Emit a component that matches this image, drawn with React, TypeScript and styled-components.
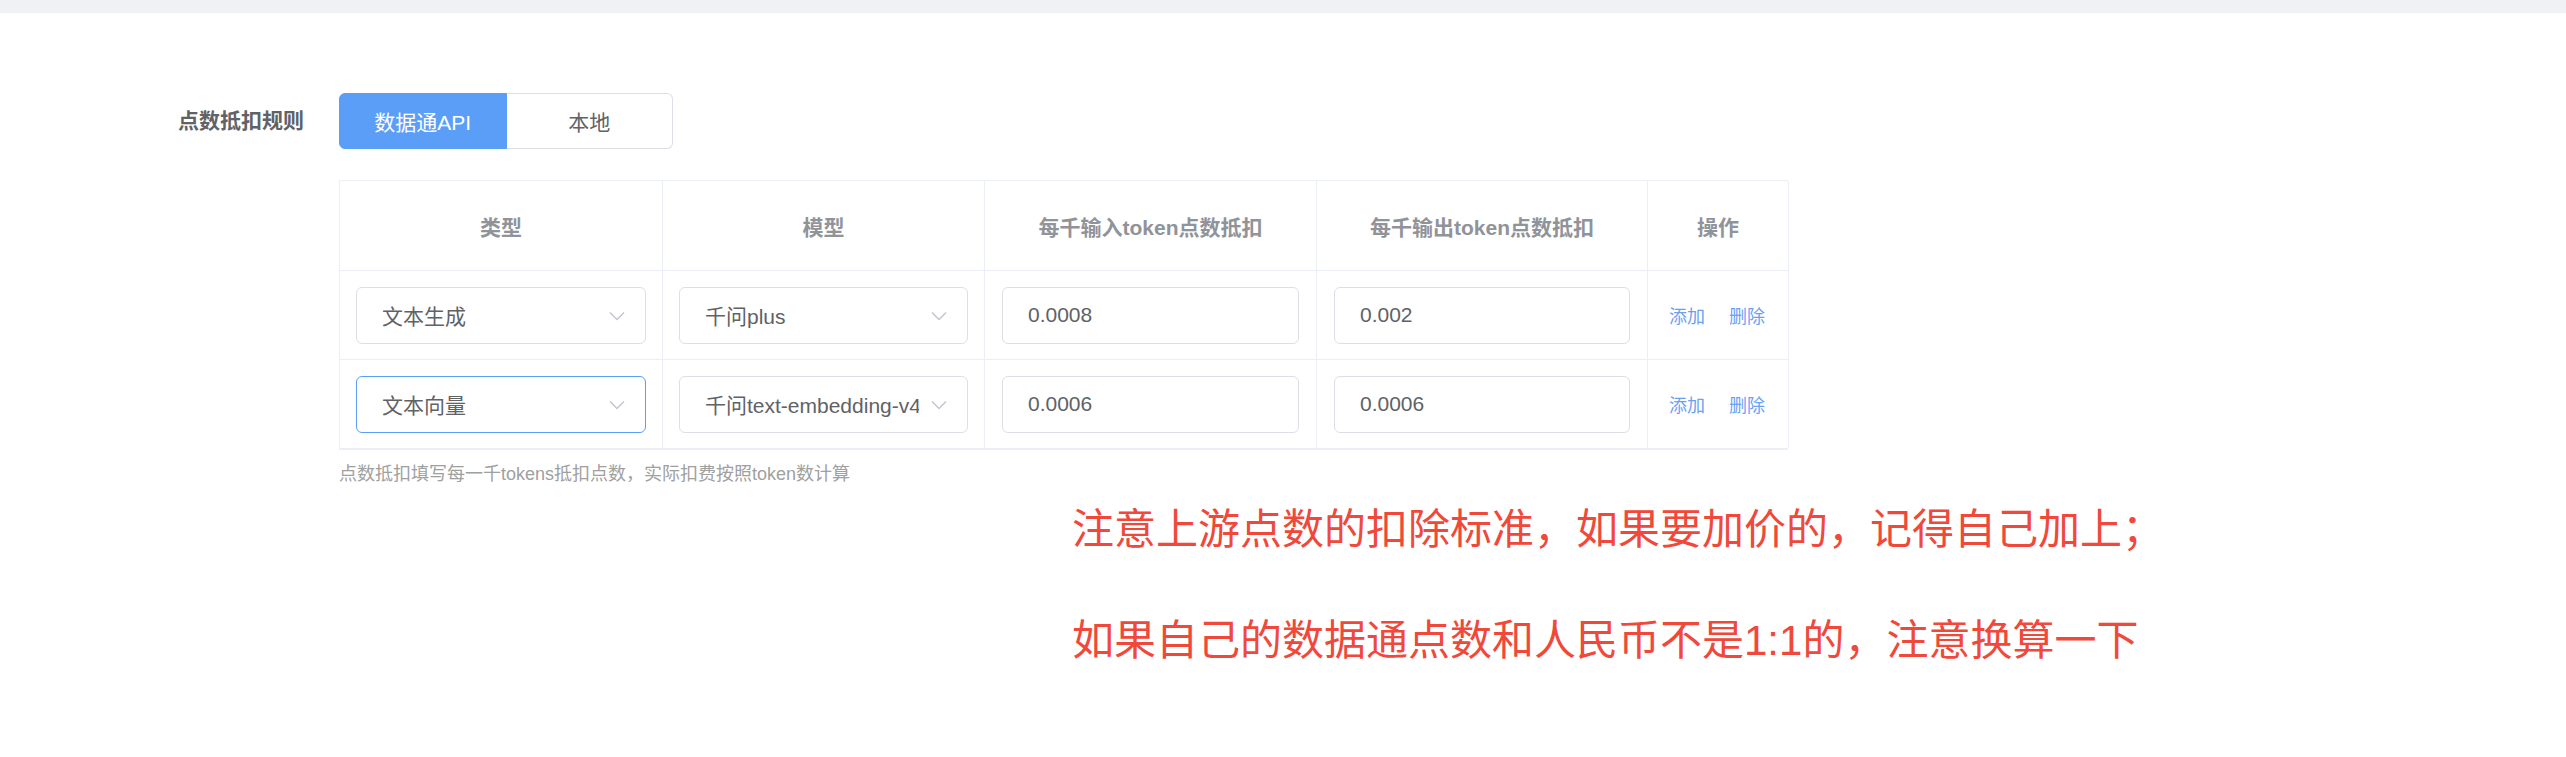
import styled, { createGlobalStyle } from "styled-components"
import { useState } from "react"

const GlobalStyle = createGlobalStyle`
    body {
        margin: 0;
        background: #ffffff;
        font-family: "Liberation Sans", "Noto Sans CJK SC", sans-serif;
    }
    * {
        box-sizing: border-box;
    }
`

const rules = [
    { type: "文本生成", model: "千问plus", input: "0.0008", output: "0.002" },
    { type: "文本向量", model: "千问text-embedding-v4", input: "0.0006", output: "0.0006" },
]

const columns = ["类型", "模型", "每千输入token点数抵扣", "每千输出token点数抵扣", "操作"]

const TopStrip = styled.div`
    height: 13px;
    background: #eff2f5;
`

const Content = styled.div`
    padding-top: 80px;
`

const FormRow = styled.div`
    display: flex;
    align-items: flex-start;
`

const Label = styled.label`
    width: 339px;
    padding-right: 35px;
    text-align: right;
    height: 56px;
    line-height: 56px;
    font-size: 21px;
    font-weight: bold;
    color: #606266;
`

const Control = styled.div`
    display: flex;
    flex-direction: column;
`

const ButtonGroup = styled.div`
    display: flex;
    width: 334px;
    height: 56px;
`

const ModeButton = styled.button<{ $active: boolean }>`
    flex: 1;
    height: 56px;
    font-family: inherit;
    font-size: 21px;
    border: 1px solid ${props => props.$active ? "#5b9ef8" : "#dcdfe6"};
    background: ${props => props.$active ? "#5b9ef8" : "#ffffff"};
    color: ${props => props.$active ? "#ffffff" : "#606266"};
    padding: 0;
    cursor: pointer;
    &:first-child {
        border-radius: 6px 0 0 6px;
    }
    &:last-child {
        border-left: 0;
        border-radius: 0 6px 6px 0;
    }
`

const Table = styled.div`
    margin-top: 31px;
    display: grid;
    grid-template-columns: 323px 322px 332px 331px 141px;
    border-top: 1px solid #ebeef5;
    border-left: 1px solid #ebeef5;
    border-bottom: 2px solid #ebeef5;
    width: 1449px;
`

const HeadCell = styled.div`
    height: 90px;
    display: flex;
    align-items: center;
    justify-content: center;
    border-right: 1px solid #ebeef5;
    border-bottom: 1px solid #ebeef5;
    font-size: 21px;
    font-weight: bold;
    color: #909399;
`

const Cell = styled.div<{ $last?: boolean }>`
    height: ${props => props.$last ? "88px" : "89px"};
    display: flex;
    align-items: center;
    padding: 0 16px;
    border-right: 1px solid #ebeef5;
    border-bottom: ${props => props.$last ? "0" : "1px solid #ebeef5"};
`

const InputCell = styled(Cell)`
    padding: 0 17px;
`

const OpCell = styled(Cell)`
    padding: 0 0 0 21px;
    gap: 24px;
`

const SelectBox = styled.div<{ $focused: boolean }>`
    position: relative;
    width: 100%;
    height: 57px;
    display: flex;
    align-items: center;
    padding: 0 48px 0 25px;
    border: 1px solid ${props => props.$focused ? "#5b9ef8" : "#dcdfe6"};
    border-radius: 6px;
    font-size: 21px;
    color: #606266;
    cursor: pointer;
    span {
        white-space: nowrap;
        overflow: hidden;
    }
    svg {
        position: absolute;
        right: 20px;
        top: 23px;
    }
`

const TextInput = styled.input`
    width: 100%;
    height: 57px;
    padding: 0 25px;
    border: 1px solid #dcdfe6;
    border-radius: 6px;
    font-family: inherit;
    font-size: 21px;
    color: #606266;
    &:focus {
        outline: none;
        border-color: #5b9ef8;
    }
`

const LinkButton = styled.span`
    font-size: 18px;
    color: #6aa1f5;
    cursor: pointer;
`

const Note = styled.div`
    margin-top: 6px;
    line-height: 36px;
    font-size: 18px;
    color: #a0a0a0;
`

const Annotation = styled.div`
    padding-left: 1072px;
    margin-top: 6px;
    display: flex;
    flex-direction: column;
    gap: 48px;
    p {
        margin: 0;
        line-height: 63px;
        font-size: 42px;
        color: #f0483a;
        white-space: nowrap;
    }
`

function Chevron() {
    return (
        <svg width="16" height="10" viewBox="0 0 16 10" fill="none">
            <path d="M1 1.5 L8 8.5 L15 1.5" stroke="#c0c4cc" strokeWidth="1.4" />
        </svg>
    )
}

export default function App() {
    const [mode, setMode] = useState("api")

    return (
        <>
            <GlobalStyle />
            <TopStrip />
            <Content>
                <FormRow>
                    <Label>点数抵扣规则</Label>
                    <Control>
                        <ButtonGroup>
                            <ModeButton $active={mode === "api"} onClick={() => setMode("api")}>数据通API</ModeButton>
                            <ModeButton $active={mode === "local"} onClick={() => setMode("local")}>本地</ModeButton>
                        </ButtonGroup>
                        <Table>
                            {columns.map(col => <HeadCell key={col}>{col}</HeadCell>)}
                            {rules.map((rule, i) => {
                                const last = i === rules.length - 1
                                return [
                                    <Cell key={i + "t"} $last={last}>
                                        <SelectBox $focused={i === 1}>
                                            <span>{rule.type}</span>
                                            <Chevron />
                                        </SelectBox>
                                    </Cell>,
                                    <Cell key={i + "m"} $last={last}>
                                        <SelectBox $focused={false}>
                                            <span>{rule.model}</span>
                                            <Chevron />
                                        </SelectBox>
                                    </Cell>,
                                    <InputCell key={i + "i"} $last={last}>
                                        <TextInput defaultValue={rule.input} />
                                    </InputCell>,
                                    <InputCell key={i + "o"} $last={last}>
                                        <TextInput defaultValue={rule.output} />
                                    </InputCell>,
                                    <OpCell key={i + "op"} $last={last}>
                                        <LinkButton>添加</LinkButton>
                                        <LinkButton>删除</LinkButton>
                                    </OpCell>,
                                ]
                            })}
                        </Table>
                        <Note>点数抵扣填写每一千tokens抵扣点数，实际扣费按照token数计算</Note>
                    </Control>
                </FormRow>
                <Annotation>
                    <p>注意上游点数的扣除标准，如果要加价的，记得自己加上；</p>
                    <p>如果自己的数据通点数和人民币不是1:1的，注意换算一下</p>
                </Annotation>
            </Content>
        </>
    )
}
